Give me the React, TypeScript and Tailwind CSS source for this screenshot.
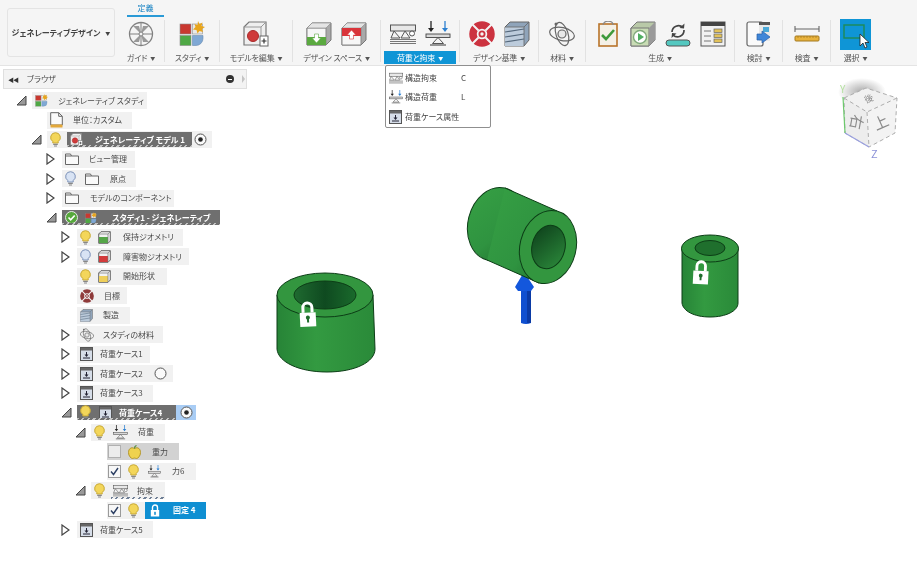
import type { ReactNode } from "react";

type IconProps = { size?: number };

function Guide({ size = 26 }: IconProps) {
  return (
    <svg width={size} height={size} viewBox="0 0 26 26" fill="none" className="shrink-0">
      <circle cx="13" cy="13" r="11.500" fill="#f4f4f4" stroke="#808080" strokeWidth="1.300" />
      <path d="M1.500 13h23M13 1.500v23" stroke="#808080" />
      <path d="M13 13 5 5h6zM13 13l8-8h-6zM13 13l-8 8h6zM13 13l8 8h-6z" fill="#999" />
      <circle cx="13" cy="13" r="2" fill="#f4f4f4" stroke="#808080" />
    </svg>
  );
}

function Study({ size = 26 }: IconProps) {
  return (
    <svg width={size} height={size} viewBox="0 0 26 26" fill="none" className="shrink-0">
      <rect x="1" y="3" width="11" height="10" fill="#c9382f" stroke="#8c8c8c" strokeWidth=".6" />
      <rect x="13.500" y="3" width="10" height="10" fill="#e9e9e9" stroke="#8c8c8c" strokeWidth=".6" />
      <path d="m19 0 1.500 3 3-1.500-1 3.500 3.500 1-3 2 1 3-3.500-1-2 2.500-1-3.500-3.500-.5 2.500-2.500-1-3 3 1z" fill="#e8a51c" />
      <rect x="1" y="14.500" width="11" height="10" fill="#4fa845" stroke="#8c8c8c" strokeWidth=".6" />
      <path d="M13.500 14.500H24v3a7 7 0 0 1-7 7h-3.500z" fill="#7fa8d4" stroke="#6a8bb0" strokeWidth=".6" />
    </svg>
  );
}

function EditModel({ size = 26 }: IconProps) {
  return (
    <svg width={size} height={size} viewBox="0 0 26 26" fill="none" className="shrink-0">
      <path d="M1 6 6 1h17v18l-5 5H1z" fill="#efefef" stroke="#777" strokeWidth="1.200" />
      <path d="M18 24V6H1M18 6l5-5" stroke="#999" />
      <circle cx="10" cy="15" r="5.500" fill="#cf3a3a" stroke="#a92b2b" />
      <rect x="17" y="15" width="8" height="10" fill="#fff" stroke="#666" />
      <path d="M21 17.500v5M18.500 20h5" stroke="#333" strokeWidth="1.200" />
    </svg>
  );
}

function CubeArrow({ size = 26, color, up }: IconProps & { color: string; up?: boolean }) {
  return (
    <svg width={size} height={size} viewBox="0 0 26 26" fill="none" className="shrink-0">
      <path d="M1 7 6 2h19v17l-5 5H1z" fill="#a9a9a9" stroke="#777" />
      <path d="M1 7h19v17H1z" fill="#f6f6f6" stroke="#888" />
      <path d="M6 2h19l-5 5H1z" fill="#e4e4e4" stroke="#888" strokeWidth=".6" />
      <path d={up ? "M1 7h19v8H1z" : "M1 16h19v8H1z"} fill={color} />
      <path
        d={up ? "M10.500 9 15 14h-2.500v4h-4v-4H6z" : "M10.500 22 15 17h-2.500v-4h-4v4H6z"}
        fill={up ? "#fff" : "#fff"}
        stroke={color}
        strokeWidth=".6"
      />
    </svg>
  );
}

function Constraint({ size = 26 }: IconProps) {
  return (
    <svg width={size} height={size} viewBox="0 0 26 26" fill="none" className="shrink-0">
      <rect x="0.500" y="4" width="25" height="6" fill="#e8e8e8" stroke="#555" />
      <path d="m4 10 6 7H1zM15 10l5 7h-9z" fill="#f4f4f4" stroke="#555" />
      <circle cx="22" cy="12.500" r="2.500" fill="#fff" stroke="#555" />
      <path d="M0 18.500h26M0 20.500h26M0 22.500h26" stroke="#777" />
    </svg>
  );
}

function LoadIcon({ size = 26 }: IconProps) {
  return (
    <svg width={size} height={size} viewBox="0 0 26 26" fill="none" className="shrink-0">
      <path d="M6 0v9" stroke="#222" strokeWidth="1.300" />
      <path d="m3 7 3 4 3-4z" fill="#222" />
      <path d="M20 0v9" stroke="#2b7fd0" strokeWidth="1.300" />
      <path d="m17 7 3 4 3-4z" fill="#2b7fd0" />
      <rect x="1" y="13" width="24" height="3.500" fill="#d9d9d9" stroke="#444" strokeWidth=".9" />
      <path d="m13 16.500 5.500 6h-11z" fill="#f4f4f4" stroke="#444" strokeWidth=".9" />
      <path d="M5 24h16" stroke="#555" strokeWidth="1.200" />
    </svg>
  );
}

function Target({ size = 26, dark }: IconProps & { dark?: boolean }) {
  const red = dark ? "#8f3a3a" : "#cc3340";
  return (
    <svg width={size} height={size} viewBox="0 0 26 26" fill="none" className="shrink-0">
      <circle cx="13" cy="13" r="9" stroke={red} strokeWidth="7.500" />
      <circle cx="13" cy="13" r="2.600" stroke={red} strokeWidth="1.800" />
      <path d="M3.500 3.500l6 6M22.500 3.500l-6 6M3.500 22.500l6-6M22.500 22.500l-6-6" stroke="#f4f4f4" strokeWidth="2" />
    </svg>
  );
}

function Layers({ size = 26 }: IconProps) {
  return (
    <svg width={size} height={size} viewBox="0 0 26 26" fill="none" className="shrink-0">
      <path d="M1 6 6 1h19v18l-5 6H1z" fill="#8fa4ba" stroke="#666" />
      <path d="M1 6h19v19H1z" fill="#bccbdb" />
      <path d="M20 25V6H1M20 6l5-5" stroke="#666" strokeWidth=".8" />
      <path d="M1 11 20 8M1 16l19-3M1 21l19-3" stroke="#55687c" strokeWidth="1.100" />
    </svg>
  );
}

function Atom({ size = 26 }: IconProps) {
  return (
    <svg width={size} height={size} viewBox="0 0 26 26" fill="none" className="shrink-0">
      <ellipse cx="13" cy="13" rx="12.500" ry="6.500" transform="rotate(12 13 13)" stroke="#666" strokeWidth="1.200" />
      <ellipse cx="13" cy="13" rx="12" ry="6" transform="rotate(72 13 13)" stroke="#666" strokeWidth="1.200" />
      <circle cx="13" cy="13" r="4" fill="#e8e8e8" stroke="#666" strokeWidth="1.200" />
      <circle cx="7" cy="3" r="1.500" fill="#666" />
    </svg>
  );
}

function Clipboard({ size = 26 }: IconProps) {
  return (
    <svg width={size} height={size} viewBox="0 0 26 26" fill="none" className="shrink-0">
      <rect x="4" y="3" width="18" height="22" fill="#f4f0e6" stroke="#b8742a" strokeWidth="1.600" />
      <path d="M8 4c0-5 10-5 10 0" stroke="#888" strokeWidth="1.200" />
      <path d="m7 14 4 4 8-9" stroke="#3f9a3a" strokeWidth="2.600" />
    </svg>
  );
}

function PlayCube({ size = 26 }: IconProps) {
  return (
    <svg width={size} height={size} viewBox="0 0 26 26" fill="none" className="shrink-0">
      <path d="M1 7 7 1h18v18l-6 6H1z" fill="#b9c9a8" stroke="#777" />
      <path d="M1 7h18v18H1z" fill="#c9dcb5" stroke="#777" />
      <path d="M19 25V7l6-6v18z" fill="#9a9a9a" />
      <circle cx="10" cy="16" r="6.500" fill="#fff" stroke="#7fa87a" strokeWidth="1.400" />
      <path d="m8 12 6 4-6 4z" fill="#4fae62" />
    </svg>
  );
}

function Refresh({ size = 26 }: IconProps) {
  return (
    <svg width={size} height={size} viewBox="0 0 26 26" fill="none" className="shrink-0">
      <path d="M7 11a6.500 6.500 0 0 1 11-4.500M19 9a6.500 6.500 0 0 1-11 5" stroke="#444" strokeWidth="1.700" />
      <path d="m19.500 2.500-.5 5-4.500-.5zM6.500 17l.5-5 4.500.5z" fill="#444" />
      <rect x="1" y="19" width="24" height="6" rx="3" fill="#54c8c0" stroke="#555" />
    </svg>
  );
}

function TableList({ size = 26 }: IconProps) {
  return (
    <svg width={size} height={size} viewBox="0 0 26 26" fill="none" className="shrink-0">
      <rect x="1" y="1" width="24" height="24" fill="#f1f1f1" stroke="#555" />
      <rect x="1" y="1" width="24" height="4" fill="#444" />
      <path d="M4 10h7M4 15h7M4 20h7" stroke="#777" />
      <rect x="14" y="8" width="8" height="3.500" fill="#e2c25a" stroke="#666" strokeWidth=".7" />
      <rect x="14" y="13" width="8" height="3.500" fill="#e2c25a" stroke="#666" strokeWidth=".7" />
      <rect x="14" y="18" width="8" height="3.500" fill="#e2c25a" stroke="#666" strokeWidth=".7" />
    </svg>
  );
}

function Explore({ size = 26 }: IconProps) {
  return (
    <svg width={size} height={size} viewBox="0 0 26 26" fill="none" className="shrink-0">
      <rect x="1" y="1" width="16" height="24" rx="2" fill="#fafafa" stroke="#666" strokeWidth="1.200" />
      <rect x="13" y="2" width="11" height="18" fill="#e8e8e8" />
      <rect x="13" y="1" width="11" height="3" fill="#555" />
      <rect x="17" y="6" width="6" height="5" fill="#4aa9d8" />
      <path d="M11 13h5v-3l8 6-8 6v-3h-5z" fill="#3f86d8" stroke="#2a5fa8" strokeWidth=".7" />
    </svg>
  );
}

function Ruler({ size = 26 }: IconProps) {
  return (
    <svg width={size} height={size} viewBox="0 0 26 26" fill="none" className="shrink-0">
      <path d="M1 8h24M1 5v6M25 5v6" stroke="#666" strokeWidth="1.100" />
      <rect x="1" y="15" width="24" height="5" rx="1" fill="#e8b23c" stroke="#a47a20" />
      <path d="M4 15v2M7 15v2M10 15v2M13 15v2M16 15v2M19 15v2M22 15v2" stroke="#a47a20" strokeWidth=".7" />
    </svg>
  );
}

function Select() {
  return (
    <svg width="31" height="31" viewBox="0 0 31 31" fill="none" className="shrink-0">
      <rect width="31" height="31" fill="#0f95d6" />
      <rect x="4" y="6" width="20" height="13" stroke="#1f8a55" strokeWidth="1.400" />
      <path d="M20 15v12l3-3 2 5 2-1-2-4.500h4z" fill="#fff" stroke="#222" strokeWidth=".8" />
    </svg>
  );
}

function Bulb({ off }: { off?: boolean }) {
  return (
    <svg width="11" height="15" viewBox="0 0 11 15" fill="none" className="shrink-0">
      <path
        d="M5.500.7a4.800 4.800 0 0 0-2.700 8.800V11h5.400V9.500A4.800 4.800 0 0 0 5.500.7z"
        fill={off ? "#d8e3f4" : "#f3d65a"}
        stroke={off ? "#7d92b8" : "#c7a938"}
      />
      <path d="M3.200 12.300h4.600M4 14h3" stroke="#888" strokeWidth="1.200" />
    </svg>
  );
}

function Folder() {
  return (
    <svg width="14" height="12" viewBox="0 0 14 12" fill="none" className="shrink-0">
      <path d="M.5 1h5l1 2h7v8.500H.5z" fill="#fafafa" stroke="#666" />
      <path d="M.5 3h6" stroke="#666" />
    </svg>
  );
}

function Doc() {
  return (
    <svg width="13" height="16" viewBox="0 0 13 16" fill="none" className="shrink-0">
      <path d="M.7.700h8l3.600 3.600V13H.7z" fill="#fafafa" stroke="#666" />
      <path d="M8.700.700v3.600h3.600" stroke="#666" />
      <rect x=".5" y="12.500" width="12" height="3" rx=".5" fill="#e3a83a" />
    </svg>
  );
}

function SmallCube({ color }: { color: string }) {
  return (
    <svg width="13" height="13" viewBox="0 0 13 13" fill="none" className="shrink-0">
      <path d="M.7 3 3 .7h9.300V10L10 12.300H.7z" fill="#f2f2f2" stroke="#666" />
      <path d="M1 6h9v6H1z" fill={color} />
      <path d="M10 12.300V3H.7M10 3l2.300-2.300" stroke="#777" strokeWidth=".7" />
    </svg>
  );
}

function LoadCase() {
  return (
    <svg width="13" height="14" viewBox="0 0 13 14" fill="none" className="shrink-0">
      <rect x=".5" y=".5" width="12" height="13" fill="#d6dde8" stroke="#555" />
      <rect x="1" y="1" width="11" height="2.500" fill="#666" />
      <path d="M6.500 5v4" stroke="#223" />
      <path d="m4.500 7.500 2 2.500 2-2.500z" fill="#223" />
      <path d="M3 11h7" stroke="#223" />
    </svg>
  );
}

function Apple() {
  return (
    <svg width="13" height="14" viewBox="0 0 13 14" fill="none" className="shrink-0">
      <path d="M6.500 3.500C3 1.500.5 4 .5 7.500s2.500 6 4 6c1 0 1.200-.4 2-.4s1 .4 2 .4c1.500 0 4-2.500 4-6s-2.500-6-6-4z" fill="#efd24f" stroke="#b3962c" />
      <path d="M6.500 3.500C6.500 2 7 1 8.500.5" stroke="#4f8a33" strokeWidth="1.200" />
    </svg>
  );
}

function TinyLock({ color = "#fff" }: { color?: string }) {
  return (
    <svg width="10" height="13" viewBox="0 0 10 13" fill="none" className="shrink-0">
      <path d="M2.500 6V3.500a2.500 2.500 0 0 1 5 0V6" stroke={color} strokeWidth="1.400" />
      <rect x=".8" y="6" width="8.400" height="6.500" fill={color} />
      <rect x="4.200" y="7.800" width="1.600" height="3" fill="#1a8fcf" />
    </svg>
  );
}

function Check({ checked, dim }: { checked?: boolean; dim?: boolean }) {
  return (
    <span
      className={`w-[13px] h-[13px] shrink-0 flex items-center justify-center border ${
        dim ? "border-[#b0b0b0] bg-[#ececec]" : "border-[#9a9a9a] bg-[#f7f7f7]"
      }`}
    >
      {checked ? (
        <svg width="9" height="9" viewBox="0 0 9 9" fill="none">
          <path d="m1 4.500 2.500 3L8 1" stroke="#2c3f63" strokeWidth="1.400" />
        </svg>
      ) : null}
    </span>
  );
}

function Radio({ on }: { on?: boolean }) {
  return (
    <svg width="13" height="13" viewBox="0 0 13 13" fill="none" className="shrink-0">
      <circle cx="6.500" cy="6.500" r="5.500" fill="#fafafa" stroke="#555" />
      {on ? <circle cx="6.500" cy="6.500" r="2.300" fill="#222" /> : null}
    </svg>
  );
}

function Hatch() {
  return (
    <span className="absolute inset-x-0 bottom-0 h-[2px] bg-[repeating-linear-gradient(135deg,#c4c4c4_0,#c4c4c4_1.500px,#6f6f6f_1.500px,#6f6f6f_4px)]" />
  );
}

function Label({ className = "", children }: { className?: string; children: ReactNode }) {
  return <span className={`whitespace-nowrap ${className}`}>{children}</span>;
}

const levels = ["ml-[16px]", "ml-[31px]", "ml-[46px]", "ml-[61px]", "ml-[75px]", "ml-[91px]"];

function Row({
  level,
  tri,
  children,
}: {
  level: number;
  tri?: "open" | "closed";
  children: ReactNode;
}) {
  return (
    <div className={`flex items-center h-[19.5px] ${levels[level]}`}>
      <span className="w-[16px] shrink-0 flex items-center">
        {tri === "open" ? (
          <svg width="11" height="11" viewBox="0 0 11 11" fill="none">
            <path d="M10 1v9H1z" fill="#999" stroke="#444" />
          </svg>
        ) : tri === "closed" ? (
          <svg width="9" height="12" viewBox="0 0 9 12" fill="none">
            <path d="M1 1v10l7-5z" fill="#fff" stroke="#444" strokeWidth="1.200" />
          </svg>
        ) : null}
      </span>
      {children}
    </div>
  );
}

function Chip({ className, children }: { className: string; children: ReactNode }) {
  return (
    <div className={`relative flex items-center h-[17px] pl-[3px] bg-[#f1f1f1] ${className}`}>
      {children}
    </div>
  );
}

function Dark({ className, children }: { className: string; children: ReactNode }) {
  return (
    <div className={`relative flex items-center h-[15px] pl-[3px] bg-[#6f6f6f] text-white font-bold ${className}`}>
      {children}
      <Hatch />
    </div>
  );
}

function Browser() {
  return (
    <aside className="w-[247px] shrink-0 text-[8px] text-[#4a4a4a] pt-[3px]">
      <div className="ml-[3px] h-[20px] flex items-center bg-[#f3f3f3] border border-[#dfdfdf] pl-[4px]">
        <span className="text-[#333] text-[6px] tracking-[-1px]">◀◀</span>
        <span className="ml-[9px]">ブラウザ</span>
        <span className="ml-auto mr-[8px] w-[8px] h-[8px] rounded-full bg-[#333] flex items-center justify-center">
          <span className="w-[4px] h-px bg-white" />
        </span>
        <span className="mr-[1px] w-0 h-0 border-y-[4px] border-y-transparent border-l-[3px] border-l-[#c4c4c4]" />
      </div>
      <div className="pt-[2px]">
        <Row level={0} tri="open">
          <Chip className="w-[115px]">
            <Study size={13} />
            <Label className="ml-[10px]">ジェネレーティブ スタディ</Label>
          </Chip>
        </Row>
        <Row level={1}>
          <Chip className="w-[85px]">
            <Doc />
            <Label className="ml-[10px]">単位：カスタム</Label>
          </Chip>
        </Row>
        <Row level={1} tri="open">
          <Chip className="w-[165px]">
            <Bulb />
            <Dark className="ml-[6px] w-[125px]">
              <EditModel size={13} />
              <Label className="ml-[12px]">ジェネレーティブ モデル 1</Label>
            </Dark>
            <span className="ml-[2px]">
              <Radio on />
            </span>
          </Chip>
        </Row>
        <Row level={2} tri="closed">
          <Chip className="w-[73px]">
            <Folder />
            <Label className="ml-[10px]">ビュー管理</Label>
          </Chip>
        </Row>
        <Row level={2} tri="closed">
          <Chip className="w-[74px]">
            <Bulb off />
            <span className="ml-[9px]">
              <Folder />
            </span>
            <Label className="ml-[11px]">原点</Label>
          </Chip>
        </Row>
        <Row level={2} tri="closed">
          <Chip className="w-[112px]">
            <Folder />
            <Label className="ml-[11px]">モデルのコンポーネント</Label>
          </Chip>
        </Row>
        <Row level={2} tri="open">
          <Dark className="w-[158px]">
            <svg width="13" height="13" viewBox="0 0 13 13" fill="none" className="shrink-0">
              <circle cx="6.500" cy="6.500" r="6" fill="#56a83c" stroke="#e6e6e6" />
              <path d="m3.500 6.500 2.200 2.300 4-4.300" stroke="#fff" strokeWidth="1.600" />
            </svg>
            <span className="ml-[7px]">
              <Study size={12} />
            </span>
            <Label className="ml-[15px]">スタディ1 - ジェネレーティブ</Label>
          </Dark>
        </Row>
        <Row level={3} tri="closed">
          <Chip className="w-[106px]">
            <Bulb />
            <span className="ml-[7px]">
              <SmallCube color="#55a648" />
            </span>
            <Label className="ml-[12px]">保持ジオメトリ</Label>
          </Chip>
        </Row>
        <Row level={3} tri="closed">
          <Chip className="w-[112px]">
            <Bulb off />
            <span className="ml-[7px]">
              <SmallCube color="#d33b3b" />
            </span>
            <Label className="ml-[12px]">障害物ジオメトリ</Label>
          </Chip>
        </Row>
        <Row level={3}>
          <Chip className="w-[90px]">
            <Bulb />
            <span className="ml-[7px]">
              <SmallCube color="#efcf5a" />
            </span>
            <Label className="ml-[12px]">開始形状</Label>
          </Chip>
        </Row>
        <Row level={3}>
          <Chip className="w-[50px]">
            <Target size={14} dark />
            <Label className="ml-[10px]">目標</Label>
          </Chip>
        </Row>
        <Row level={3}>
          <Chip className="w-[53px]">
            <Layers size={13} />
            <Label className="ml-[10px]">製造</Label>
          </Chip>
        </Row>
        <Row level={3} tri="closed">
          <Chip className="w-[86px]">
            <Atom size={14} />
            <Label className="ml-[9px]">スタディの材料</Label>
          </Chip>
        </Row>
        <Row level={3} tri="closed">
          <Chip className="w-[73px]">
            <LoadCase />
            <Label className="ml-[7px]">荷重ケース1</Label>
          </Chip>
        </Row>
        <Row level={3} tri="closed">
          <Chip className="w-[96px]">
            <LoadCase />
            <Label className="ml-[7px]">荷重ケース2</Label>
            <span className="ml-[11px]">
              <Radio />
            </span>
          </Chip>
        </Row>
        <Row level={3} tri="closed">
          <Chip className="w-[76px]">
            <LoadCase />
            <Label className="ml-[7px]">荷重ケース3</Label>
          </Chip>
        </Row>
        <Row level={3} tri="open">
          <Dark className="w-[99px]">
            <Bulb />
            <span className="ml-[8px]">
              <LoadCase />
            </span>
            <Label className="ml-[7px]">荷重ケース4</Label>
          </Dark>
          <span className="w-[20px] h-[15px] bg-[#a9cdf5] flex items-center justify-center">
            <Radio on />
          </span>
        </Row>
        <Row level={4} tri="open">
          <Chip className="w-[74px]">
            <Bulb />
            <span className="ml-[8px]">
              <LoadIcon size={15} />
            </span>
            <Label className="ml-[10px]">荷重</Label>
          </Chip>
        </Row>
        <Row level={5}>
          <div className="flex items-center h-[17px] w-[72px] bg-[#d2d2d2] pl-[1px]">
            <Check dim />
            <span className="ml-[7px]">
              <Apple />
            </span>
            <Label className="ml-[11px]">重力</Label>
          </div>
        </Row>
        <Row level={5}>
          <div className="flex items-center h-[17px] w-[89px] bg-[#f1f1f1] pl-[1px]">
            <Check checked />
            <span className="ml-[7px]">
              <Bulb />
            </span>
            <span className="ml-[9px]">
              <LoadIcon size={13} />
            </span>
            <Label className="ml-[11px]">力6</Label>
          </div>
        </Row>
        <Row level={4} tri="open">
          <Chip className="w-[74px]">
            <Bulb />
            <span className="ml-[8px]">
              <Constraint size={15} />
            </span>
            <Label className="ml-[9px]">拘束</Label>
            <span className="absolute left-[20px] right-0 bottom-0 h-[2px] bg-[repeating-linear-gradient(135deg,#6f7f96_0,#6f7f96_1.500px,#f1f1f1_1.500px,#f1f1f1_4px)]" />
          </Chip>
        </Row>
        <Row level={5}>
          <div className="flex items-center h-[17px] w-[99px] bg-[#f1f1f1] pl-[1px]">
            <Check checked />
            <span className="ml-[7px]">
              <Bulb />
            </span>
            <div className="ml-[6px] w-[61px] h-[17px] flex items-center pl-[5px] bg-[#0f8fd2] text-white font-bold">
              <TinyLock />
              <Label className="ml-[13px]">固定 4</Label>
            </div>
          </div>
        </Row>
        <Row level={3} tri="closed">
          <Chip className="w-[76px]">
            <LoadCase />
            <Label className="ml-[7px]">荷重ケース5</Label>
          </Chip>
        </Row>
      </div>
    </aside>
  );
}

function Sep() {
  return <span className="w-px h-[42px] mt-[3px] bg-[#e2e2e2] shrink-0" />;
}

function Group({
  width,
  label,
  active,
  gap = "gap-[9px]",
  children,
}: {
  width: string;
  label: string;
  active?: boolean;
  gap?: string;
  children: ReactNode;
}) {
  return (
    <div className={`flex flex-col shrink-0 ${width}`}>
      <div className={`h-[34px] flex items-center justify-center ${gap}`}>{children}</div>
      <div
        className={`h-[13px] flex items-center justify-center gap-[3px] text-[8px] tracking-[-0.2px] whitespace-nowrap ${
          active ? "mx-[3px] bg-[#0f95d6] text-white" : "text-[#555]"
        }`}
      >
        {label}
        <span className="text-[5px]">▼</span>
      </div>
    </div>
  );
}

function Toolbar() {
  return (
    <header className="h-[66px] shrink-0 flex bg-[#f5f5f5] border-b border-[#e4e4e4]">
      <button
        type="button"
        className="ml-[7px] mt-[8px] w-[108px] h-[49px] rounded-[3px] border border-[#e4e4e4] bg-[#f5f5f5] flex items-center justify-center gap-[5px] text-[8px] font-bold text-[#444] whitespace-nowrap"
      >
        ジェネレーティブデザイン
        <span className="text-[5px]">▼</span>
      </button>
      <div className="ml-[3px] flex flex-col">
        <div className="h-[17px] ml-[9px] w-[37px] flex items-start justify-center border-b-2 border-[#2a9ad6] text-[8px] text-[#1b84c4] pt-[2px] self-start">
          定義
        </div>
        <div className="flex">
          <Group width="w-[46px]" label="ガイド">
            <Guide />
          </Group>
          <Sep />
          <Group width="w-[54px]" label="スタディ">
            <Study />
          </Group>
          <Sep />
          <Group width="w-[72px]" label="モデルを編集">
            <EditModel />
          </Group>
          <Sep />
          <Group width="w-[87px]" label="デザイン スペース">
            <CubeArrow color="#5aa93f" />
            <CubeArrow color="#d9343a" up />
          </Group>
          <Sep />
          <Group width="w-[78px]" label="荷重と拘束" active>
            <Constraint />
            <LoadIcon />
          </Group>
          <Sep />
          <Group width="w-[78px]" label="デザイン基準">
            <Target />
            <Layers />
          </Group>
          <Sep />
          <Group width="w-[46px]" label="材料">
            <Atom />
          </Group>
          <Sep />
          <Group width="w-[148px]" label="生成">
            <Clipboard />
            <PlayCube />
            <Refresh />
            <TableList />
          </Group>
          <Sep />
          <Group width="w-[47px]" label="検討">
            <Explore />
          </Group>
          <Sep />
          <Group width="w-[47px]" label="検査">
            <Ruler />
          </Group>
          <Sep />
          <Group width="w-[49px]" label="選択">
            <Select />
          </Group>
        </div>
      </div>
    </header>
  );
}

function Menu() {
  const items = [
    { icon: <Constraint size={14} />, label: "構造拘束", key: "C" },
    { icon: <LoadIcon size={14} />, label: "構造荷重", key: "L" },
    { icon: <LoadCase />, label: "荷重ケース属性", key: "" },
  ];
  return (
    <div className="absolute left-[385px] top-[65px] w-[106px] h-[63px] pt-[2px] pl-[3px] bg-white border border-[#8f8f8f] rounded-[2px] text-[8px] text-[#444]">
      {items.map((item) => (
        <div key={item.label} className="h-[19.5px] flex items-center">
          <span className="w-[16px] shrink-0 flex items-center">{item.icon}</span>
          <span>{item.label}</span>
          {item.key ? <span className="absolute left-[75px]">{item.key}</span> : null}
        </div>
      ))}
    </div>
  );
}

function LockShape({ x, y, scale, skew }: { x: number; y: number; scale: number; skew: number }) {
  return (
    <g transform={`translate(${x} ${y}) scale(${scale}) rotate(${skew})`}>
      <path d="M3.500 12V7a4.500 4.500 0 0 1 9 0v5" stroke="#fff" strokeWidth="3" fill="none" />
      <rect x="0" y="12" width="16" height="14" fill="#fff" />
      <circle cx="8" cy="17" r="2" fill="#1f6d2c" />
      <rect x="7" y="17" width="2" height="5" fill="#1f6d2c" />
    </g>
  );
}

function Viewport() {
  return (
    <main className="flex-1 min-w-0">
      <svg viewBox="247 66 670 499" className="block w-full h-full" fill="none">
        <defs>
          <linearGradient id="side" x1="0" x2="1" y1="0" y2="0">
            <stop offset="0" stopColor="#278437" />
            <stop offset=".4" stopColor="#339a41" />
            <stop offset="1" stopColor="#2a8a39" />
          </linearGradient>
          <linearGradient id="tilt" x1="0" x2="1" y1="0" y2="1">
            <stop offset="0" stopColor="#36a044" />
            <stop offset=".6" stopColor="#2f9340" />
            <stop offset="1" stopColor="#1f6f2d" />
          </linearGradient>
          <linearGradient id="hole" x1="0" x2="1" y1="0" y2="1">
            <stop offset="0" stopColor="#0c3d1a" />
            <stop offset="1" stopColor="#2d8c3c" />
          </linearGradient>
          <linearGradient id="holeTop" x1="0" x2="1" y1="0" y2="0">
            <stop offset="0" stopColor="#1f6a30" />
            <stop offset=".5" stopColor="#0f4a20" />
            <stop offset="1" stopColor="#1a6a2c" />
          </linearGradient>
          <radialGradient id="cubeShadow" cx=".5" cy=".5" r=".5">
            <stop offset="0" stopColor="#aaa" />
            <stop offset="1" stopColor="#aaa" stopOpacity="0" />
          </radialGradient>
        </defs>

        {/* left part */}
        <path d="M277 295v54c1 13 22 23 50 23s48-10 48-23l-2-54z" fill="url(#side)" stroke="#0c3d16" />
        <ellipse cx="325" cy="295" rx="48" ry="22" fill="#33963f" stroke="#0c3d16" />
        <ellipse cx="325" cy="295" rx="31" ry="14" fill="url(#holeTop)" stroke="#0c3d16" />
        <LockShape x={299} y={301} scale={1} skew={-3} />

        {/* force arrow */}
        <path d="M521 289h10v34q-5 2-10 0z" fill="#0f4fd0" />
        <path d="M527 289h4v34h-4z" fill="#0a3aa5" />
        <path d="m524 272 10 15-3 4h-13l-3-4z" fill="#1357dc" />

        {/* middle part */}
        <ellipse cx="496" cy="224" rx="28" ry="37" transform="rotate(14 496 224)" fill="url(#tilt)" stroke="#0c3d16" />
        <path d="M505 188 557 211 539 283 487 260z" fill="url(#tilt)" />
        <path d="M505 188 557 211M487 260 539 283" stroke="#0c3d16" />
        <ellipse cx="548" cy="247" rx="28" ry="37" transform="rotate(14 548 247)" fill="#33963f" stroke="#0c3d16" />
        <ellipse cx="548.500" cy="247" rx="16.500" ry="22" transform="rotate(14 548.500 247)" fill="url(#hole)" stroke="#0c3d16" />

        {/* right part */}
        <path d="M682 248v55c1 8 12 14 28 14s28-6 28-14l0-55z" fill="url(#side)" stroke="#0c3d16" />
        <ellipse cx="710" cy="248.500" rx="28.500" ry="13.500" fill="#33963f" stroke="#0c3d16" />
        <ellipse cx="710" cy="248" rx="15" ry="7.500" fill="#1f6f2d" stroke="#0c3d16" />
        <LockShape x={694} y={259} scale={0.95} skew={3} />

        {/* view cube */}
        <ellipse cx="862" cy="92" rx="24" ry="14" fill="url(#cubeShadow)" />
        <path d="M844 98 866 88 897 98 867 112z" fill="#f1f1f1" />
        <path d="M844 98 867 112 869 147 845 133z" fill="#ededed" />
        <path d="M867 112 897 98 895 133 869 147z" fill="#f3f3f3" />
        <path d="M844 98 866 88 897 98 895 133 869 147 845 133zM844 98 867 112 897 98M867 112 869 147" stroke="#adadad" strokeDasharray="4 3" />
        <path d="M843 97 845 133" stroke="#6cc96c" strokeWidth="1.200" />
        <path d="M845 133 869 147" stroke="#9aa0e0" strokeWidth="1.200" />
        <text x="840" y="93" fontSize="10" fill="#b5e0a0">Y</text>
        <text x="871" y="158" fontSize="11" fill="#8d93d8">Z</text>
        <text x="881" y="128" fontSize="15" fill="#8a8a8a" textAnchor="middle" transform="rotate(-24 881 123)">上</text>
        <text x="856" y="127" fontSize="15" fill="#8a8a8a" textAnchor="middle" transform="rotate(100 856 122)">右</text>
        <text x="869" y="102" fontSize="9" fill="#8a8a8a" textAnchor="middle" transform="rotate(-20 869 99)">後</text>
      </svg>
    </main>
  );
}

export default function App() {
  return (
    <div className="relative w-[917px] h-[565px] overflow-hidden flex flex-col bg-white font-['Noto_Sans_CJK_JP','Liberation_Sans',sans-serif] [font-feature-settings:'palt'] blur-[0.35px]">
      <Toolbar />
      <div className="flex-1 flex min-h-0">
        <Browser />
        <Viewport />
      </div>
      <Menu />
    </div>
  );
}
